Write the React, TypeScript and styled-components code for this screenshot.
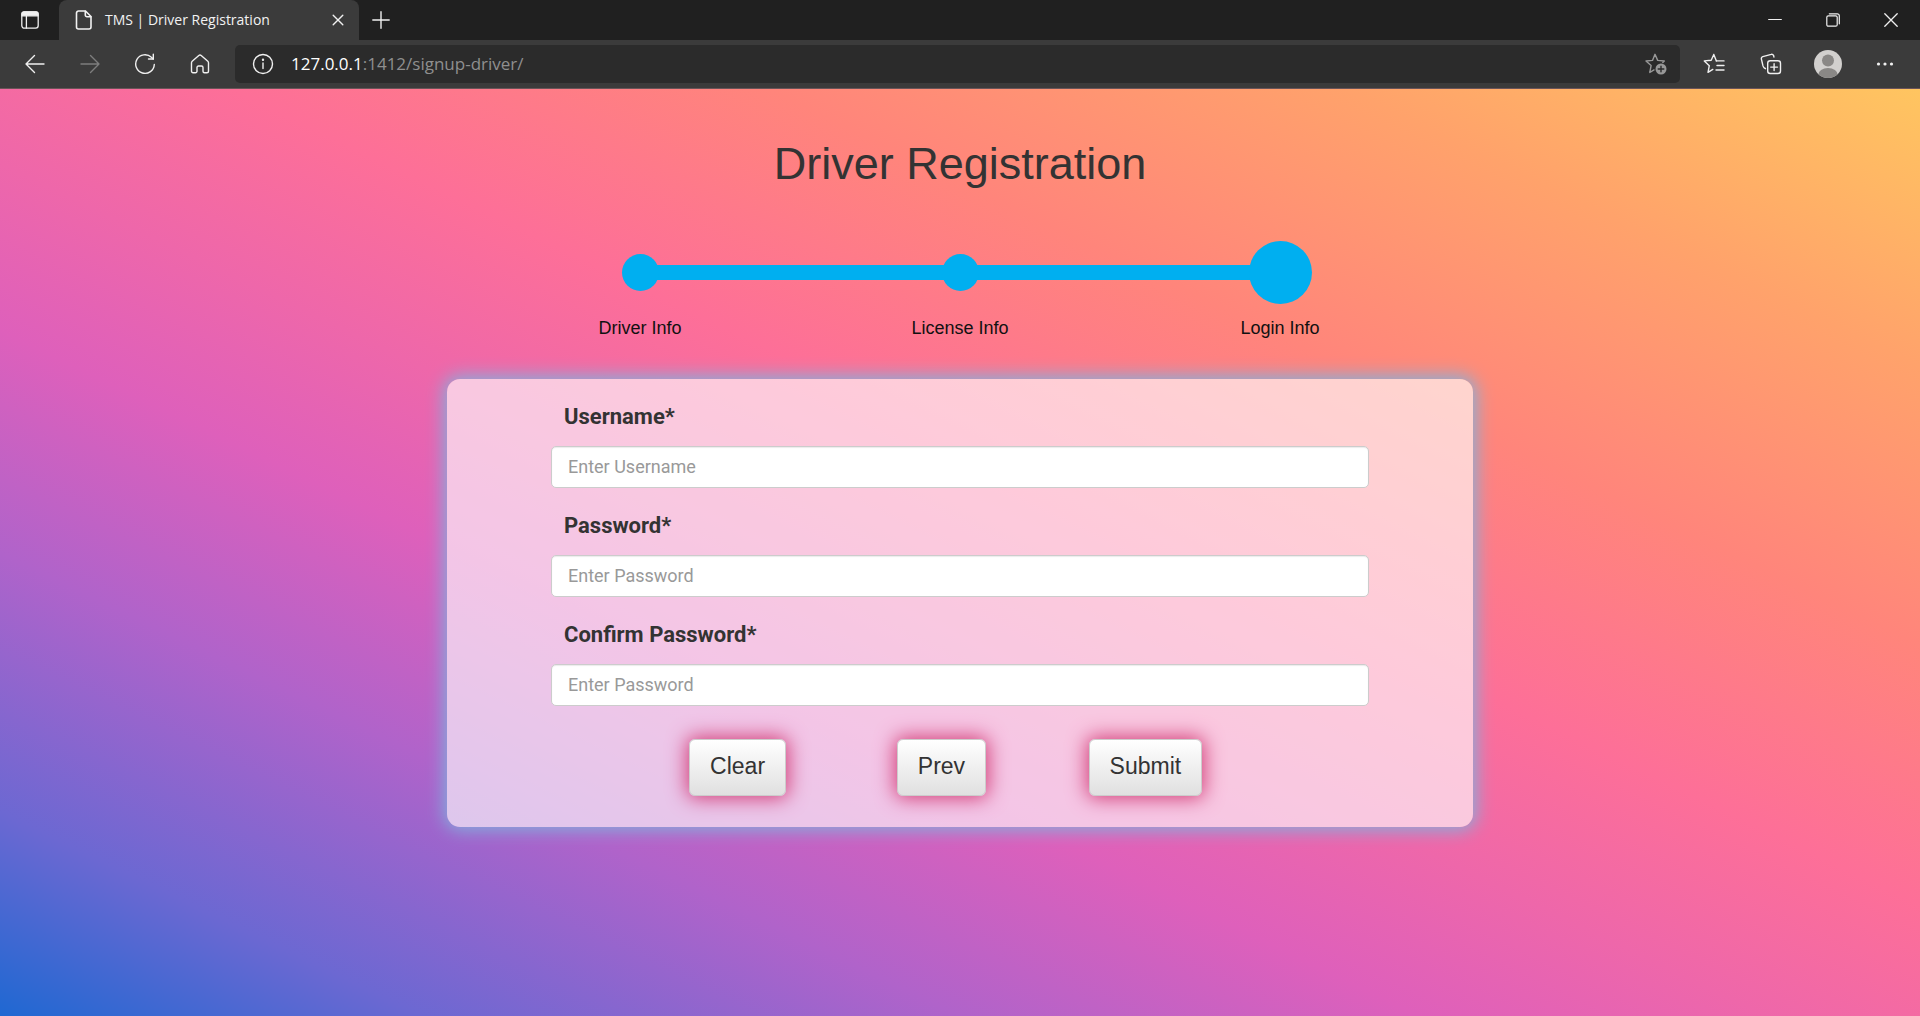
import React from "react";
import styled, { createGlobalStyle, css } from "styled-components";

const ui = `"Open Sans", "Noto Sans", sans-serif`;
const arial = `"Liberation Sans", Arial, sans-serif`;
const roboto = `Roboto, "Liberation Sans", sans-serif`;
const blue = "#00aff0";

const GlobalStyle = createGlobalStyle`
  *, *::before, *::after { box-sizing: border-box; }
  body { margin: 0; font-family: ${arial}; }
`;

const Window = styled.div`
  display: flex;
  flex-direction: column;
  min-height: 100vh;
`;

/* ---------- browser frame ---------- */

const TitleBar = styled.div`
  display: flex;
  align-items: stretch;
  height: 40px;
  background: #202020;
  color: #f2f2f2;
`;

const IconButton = styled.button<{ $width: number; $color?: string }>`
  display: flex;
  align-items: center;
  justify-content: center;
  flex: none;
  width: ${(p) => p.$width}px;
  height: 100%;
  padding: 0;
  border: 0;
  background: none;
  color: ${(p) => p.$color ?? "#f0f0f0"};
`;

const Tab = styled.div`
  display: flex;
  align-items: center;
  gap: 11px;
  width: 300px;
  padding: 0 4px 0 15px;
  border-radius: 8px 8px 0 0;
  background: #3b3b3b;
`;

const TabTitle = styled.span`
  flex: 1;
  font: 14px/20px ${ui};
  white-space: nowrap;
`;

const WindowControls = styled.div`
  display: flex;
  margin-left: auto;
`;

const Toolbar = styled.div`
  display: flex;
  align-items: center;
  height: 49px;
  padding: 0 7px;
  background: #3b3b3b;
  border-bottom: 1px solid #6a5458;
`;

const AddressBar = styled.div`
  display: flex;
  align-items: center;
  flex: 1;
  min-width: 0;
  height: 38px;
  margin: 0 5px 0 8px;
  padding-left: 4px;
  border-radius: 5px;
  background: #2b2b2b;
`;

const Address = styled.a`
  flex: 1;
  padding-left: 5px;
  font: 17px/24px ${ui};
  color: #8f8f8f;
  text-decoration: none;
`;

const Host = styled.span`
  color: #ffffff;
`;

/* ---------- page ---------- */

const Page = styled.main`
  display: flex;
  flex: 1;
  flex-direction: column;
  align-items: center;
  padding: 49px 0 48px;
  background: linear-gradient(
    to top right,
    #1f68d2 0%,
    #6c68d2 11%,
    #b063ca 25%,
    #de60bb 37%,
    #ee67aa 46%,
    #fd6f98 56%,
    #ff857b 70%,
    #ffa26b 85%,
    #ffc560 100%
  );
`;

const Heading = styled.h1`
  margin: 0;
  font: 400 45px/52px ${arial};
  color: #333333;
`;

const Steps = styled.ol`
  display: grid;
  grid-template-columns: repeat(3, 1fr);
  width: 50%;
  min-width: 360px;
  margin: 51px 0 40px;
  padding: 0;
  list-style: none;
`;

const Step = styled.li`
  font: 18px/22px ${arial};
  text-align: center;
  color: #111111;
`;

const edges = {
  first: css`background-size: 50% 15px; background-position: right center;`,
  middle: css`background-size: 100% 15px; background-position: center;`,
  last: css`background-size: 50% 15px; background-position: left center;`,
};

const Marker = styled.div<{ $place: keyof typeof edges }>`
  display: flex;
  align-items: center;
  justify-content: center;
  height: 63px;
  margin-bottom: 13px;
  background-image: linear-gradient(${blue}, ${blue});
  background-repeat: no-repeat;
  ${(p) => edges[p.$place]}
`;

const Dot = styled.span<{ $active?: boolean }>`
  width: ${(p) => (p.$active ? 63 : 37)}px;
  height: ${(p) => (p.$active ? 63 : 37)}px;
  border-radius: 50%;
  background: ${blue};
`;

const Card = styled.form`
  width: 100%;
  max-width: 1026px;
  padding: 23px 0 31px;
  border-radius: 13px;
  background: rgba(255, 255, 255, 0.64);
  box-shadow: 0 0 18px 3px #80b2de;
`;

const Field = styled.div`
  display: flex;
  flex-direction: column;
  width: 80%;
  max-width: 818px;
  margin: 0 auto 23px;
`;

const Label = styled.label`
  padding: 0 13px;
  margin-bottom: 15px;
  font: 700 22px/29px ${roboto};
  color: #333333;
`;

const Input = styled.input`
  width: 100%;
  height: 42px;
  padding: 0 16px 2px;
  border: 1px solid #cccccc;
  border-radius: 5px;
  background: #ffffff;
  box-shadow: inset 0 1px 1px rgba(0, 0, 0, 0.08);
  font: 18px/24px ${roboto};
  color: #555555;
  &::placeholder {
    color: #999999;
    opacity: 1;
  }
`;

const Actions = styled.div`
  display: grid;
  grid-template-columns: repeat(3, 1fr);
  justify-items: center;
  padding: 10px 22% 0 calc(18% + 4px);
`;

const ActionButton = styled.button`
  height: 57px;
  padding: 0 20px 4px;
  border: 1px solid #cccccc;
  border-radius: 6px;
  background: linear-gradient(#ffffff, #e0e0e0);
  box-shadow: 0 0 20px 2px #d23a75;
  font: 23px/28px ${arial};
  color: #333333;
`;

const Svg = ({ size = 20, sw = 1.4, children }: { size?: number; sw?: number; children: React.ReactNode }) => (
  <svg
    width={size}
    height={size}
    viewBox={`0 0 ${size} ${size}`}
    fill="none"
    stroke="currentColor"
    strokeWidth={sw}
    strokeLinecap="round"
    strokeLinejoin="round"
    aria-hidden="true"
  >
    {children}
  </svg>
);

const steps = [
  { name: "Driver Info", place: "first" },
  { name: "License Info", place: "middle" },
  { name: "Login Info", place: "last" },
] as const;

const fields = [
  { id: "username", label: "Username*", hint: "Enter Username", type: "text" },
  { id: "password", label: "Password*", hint: "Enter Password", type: "password" },
  { id: "confirm", label: "Confirm Password*", hint: "Enter Password", type: "password" },
];

function BrowserFrame() {
  return (
    <header>
      <TitleBar>
        <IconButton $width={59} aria-label="Tab actions">
          <Svg size={18} sw={1.3}>
            <rect x=".8" y=".8" width="16.400" height="16.400" rx="2.600" />
            <path d="M1 3a2 2 0 0 1 2-2h12a2 2 0 0 1 2 2v1.800H1z" fill="currentColor" />
            <path d="M5.400 5v12" />
          </Svg>
        </IconButton>
        <Tab>
          <Svg size={20} sw={1.6}>
            <path d="M4.500 1h7l5.500 5.500V17a2 2 0 0 1-2 2H4.500a2 2 0 0 1-2-2V3a2 2 0 0 1 2-2z" />
            <path d="M11.300 1.200V5a1.700 1.700 0 0 0 1.700 1.700h3.800" />
          </Svg>
          <TabTitle>TMS | Driver Registration</TabTitle>
          <IconButton $width={34} aria-label="Close tab">
            <Svg size={12}>
              <path d="M1.200 1.200l9.600 9.600M10.800 1.200l-9.600 9.600" />
            </Svg>
          </IconButton>
        </Tab>
        <IconButton $width={44} aria-label="New tab">
          <Svg size={18}>
            <path d="M9 .8v16.400M.8 9h16.400" />
          </Svg>
        </IconButton>
        <WindowControls>
          <IconButton $width={58} aria-label="Minimize">
            <Svg size={14} sw={1}>
              <path d="M.6 6.500h12.800" />
            </Svg>
          </IconButton>
          <IconButton $width={58} aria-label="Restore">
            <Svg size={14} sw={1.2}>
              <rect x=".8" y="2.800" width="10.400" height="10.400" rx="1.500" />
              <path d="M3.300.8h8a2 2 0 0 1 2 2v8" />
            </Svg>
          </IconButton>
          <IconButton $width={58} aria-label="Close window">
            <Svg size={14} sw={1.3}>
              <path d="M.8.8l12.400 12.400M13.200.8L.8 13.200" />
            </Svg>
          </IconButton>
        </WindowControls>
      </TitleBar>
      <Toolbar>
        <IconButton $width={55} aria-label="Back">
          <Svg>
            <path d="M19 10H1M9.500 1.500L1 10l8.500 8.500" />
          </Svg>
        </IconButton>
        <IconButton $width={55} $color="#7d7d7d" aria-label="Forward">
          <Svg>
            <path d="M1 10h18M10.500 1.500L19 10l-8.500 8.500" />
          </Svg>
        </IconButton>
        <IconButton $width={55} aria-label="Refresh">
          <Svg size={22}>
            <path d="M20.300 11.500a9.300 9.300 0 1 1-2.900-7.200L19.300 6" />
            <path d="M19.300 1.200V6h-4.800" />
          </Svg>
        </IconButton>
        <IconButton $width={55} aria-label="Home">
          <Svg>
            <path d="M1.500 8.800a2 2 0 0 1 .7-1.500L8.800 1.500a1.800 1.800 0 0 1 2.400 0l6.600 5.800a2 2 0 0 1 .7 1.500v8.400a1.500 1.500 0 0 1-1.500 1.500h-2.500a1.500 1.500 0 0 1-1.500-1.500v-3.700a1.500 1.500 0 0 0-1.500-1.500h-3A1.500 1.500 0 0 0 7 13.500v3.700a1.500 1.500 0 0 1-1.500 1.500H3a1.500 1.500 0 0 1-1.500-1.500z" />
          </Svg>
        </IconButton>
        <AddressBar>
          <IconButton $width={47} aria-label="Site information">
            <Svg size={22}>
              <circle cx="11" cy="11" r="9.500" />
              <path d="M11 10v5.500" />
              <circle cx="11" cy="6.800" r=".5" fill="currentColor" />
            </Svg>
          </IconButton>
          <Address href="#">
            <Host>127.0.0.1</Host>:1412/signup-driver/
          </Address>
          <IconButton $width={48} $color="#989898" aria-label="Add to favorites">
            <Svg size={22}>
              <path d="M9 16.900L4.800 19.500l1.300-6.900L1 8l6.500-.6L10 1.300l2.700 6.100 6.600.6-1.500 1.500" />
              <circle cx="16" cy="16" r="5.500" fill="currentColor" stroke="none" />
              <path d="M16 13.200v5.600M13.200 16h5.600" stroke="#2b2b2b" />
            </Svg>
          </IconButton>
        </AddressBar>
        <IconButton $width={57} aria-label="Favorites">
          <Svg size={22}>
            <path d="M10.800 1.500L8.200 7.200l-6.900.7 5 4.800-1.300 6.700 4.800-3M10.800 1.500l2.600 6.400" />
            <path d="M13.400 7.900H21M14 12.500h7M13 17h8" />
          </Svg>
        </IconButton>
        <IconButton $width={57} aria-label="Collections">
          <Svg size={22}>
            <path d="M5.500 15.700l-1.200-.8a4 4 0 0 1-1.300-2L1.400 6.100a2 2 0 0 1 1.400-2.500l8.400-2.200a2 2 0 0 1 2.500 1.400l.2 1.200" />
            <rect x="7.700" y="7.700" width="12.800" height="12.800" rx="2.500" />
            <path d="M14.100 10.700v6.800M10.700 14.100h6.800" />
          </Svg>
        </IconButton>
        <IconButton $width={57} aria-label="Profile">
          <svg width="28" height="28" viewBox="0 0 28 28" aria-hidden="true">
            <clipPath id="avatar">
              <circle cx="14" cy="14" r="14" />
            </clipPath>
            <g clipPath="url(#avatar)">
              <rect width="28" height="28" fill="#d2d0ce" />
              <circle cx="14" cy="10.500" r="6" fill="#8a8886" />
              <ellipse cx="14" cy="25" rx="9.800" ry="7" fill="#8a8886" />
            </g>
          </svg>
        </IconButton>
        <IconButton $width={57} aria-label="Settings and more">
          <svg width="18" height="4" viewBox="0 0 18 4" fill="currentColor" aria-hidden="true">
            <circle cx="2.500" cy="2" r="1.600" />
            <circle cx="9" cy="2" r="1.600" />
            <circle cx="15.500" cy="2" r="1.600" />
          </svg>
        </IconButton>
      </Toolbar>
    </header>
  );
}

export default function App() {
  return (
    <Window>
      <GlobalStyle />
      <BrowserFrame />
      <Page>
        <Heading>Driver Registration</Heading>
        <Steps>
          {steps.map((s) => (
            <Step key={s.name}>
              <Marker $place={s.place}>
                <Dot $active={s.place === "last"} />
              </Marker>
              {s.name}
            </Step>
          ))}
        </Steps>
        <Card onSubmit={(e) => e.preventDefault()}>
          {fields.map((f) => (
            <Field key={f.id}>
              <Label htmlFor={f.id}>{f.label}</Label>
              <Input id={f.id} type={f.type} placeholder={f.hint} />
            </Field>
          ))}
          <Actions>
            <ActionButton type="reset">Clear</ActionButton>
            <ActionButton type="button">Prev</ActionButton>
            <ActionButton type="submit">Submit</ActionButton>
          </Actions>
        </Card>
      </Page>
    </Window>
  );
}
